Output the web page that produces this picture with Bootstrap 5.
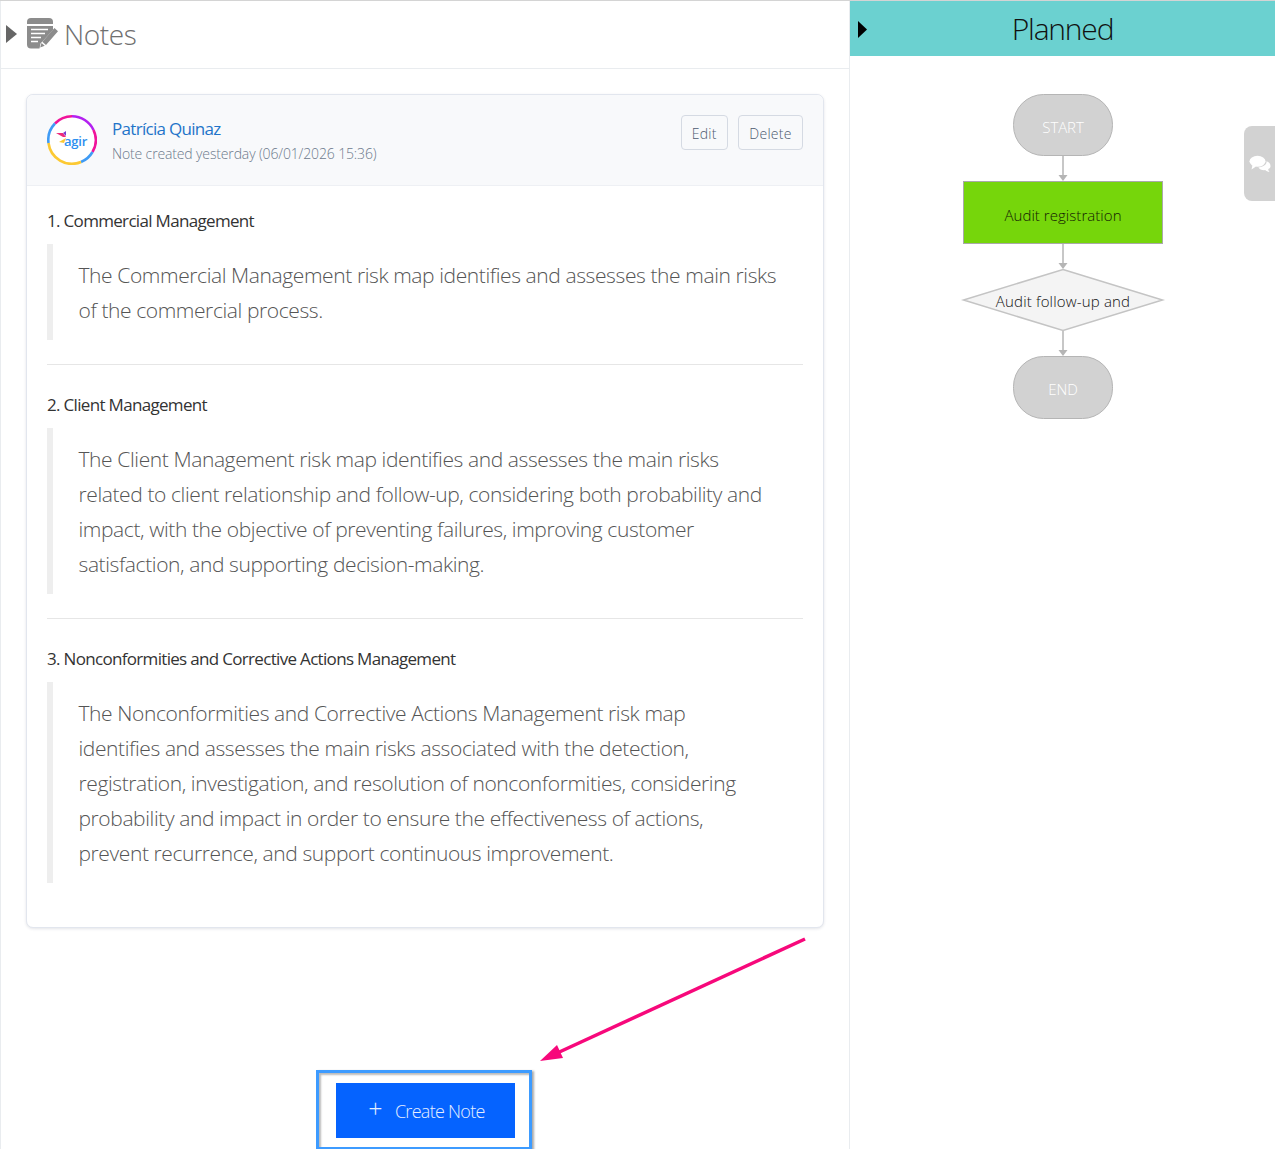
<!DOCTYPE html>
<html lang="en">
<head>
  <meta charset="UTF-8">
  <title>Notes</title>
  <link rel="stylesheet" href="https://cdn.jsdelivr.net/npm/bootstrap@5.3.0/dist/css/bootstrap.min.css">
  <style>
    html, body { height: 100%; }
    body {
      font-family: "Open Sans", "Noto Sans", sans-serif;
      font-weight: 300;
      overflow: hidden;
      position: relative;
      background: #fff;
      border-top: 1px solid #d4d4d4;
    }
    .page-wrap { height: 1148px; }
    .notes-pane { width: 850px; border-left: 1px solid #e9ecef; border-right: 1px solid #e9ecef; }
    .flow-pane { width: 425px; }
    .notes-head { height: 68px; border-bottom: 1px solid #e9ecef; padding: 0 0 2px 5px; color: #6f6f6f; }
    .notes-title { font-size: 28px; letter-spacing: -.4px; margin-left: 6px; }
    .note-icon { margin-left: 10px; }
    .note-card { margin: 25px 25px 0 25px; height: 834px; border-color: #e2e6ee; border-radius: 7px; box-shadow: 0 1px 3px rgba(30,40,70,.12); }
    .note-top { height: 91px; padding: 20px 20px 0 20px; background: #f8f9fb; border-bottom: 1px solid #eef0f4; border-radius: 7px 7px 0 0; }
    .author-box { margin-left: 15px; padding-top: 3px; }
    .author-name { font-size: 17px; letter-spacing: -.7px; color: #1f74c9; font-weight: 400; line-height: 22px; }
    .author-meta { font-size: 14px; letter-spacing: -.14px; color: #6d7a8c; line-height: 20px; margin-top: 4px; }
    .btn-row { column-gap: 10px; }
    .ghost-btn { font-size: 14px; font-weight: 300; letter-spacing: .3px; color: #4d5a70; border: 1px solid #d5dae3; border-radius: 4px; padding: 1px 10.200px 0; height: 35px; background: transparent; }
    .note-body { padding: 23px 20px 0 20px; }
    .topic-name { font-size: 17px; font-weight: 400; letter-spacing: -.68px; color: #333; line-height: 24px; margin-bottom: 11px; }
    .topic-quote { border-left: 6px solid #eee; margin: 0; padding: 14px 20px 11.500px 25.500px; font-size: 21px; line-height: 35px; letter-spacing: -.4px; color: #555; }
    .topic-sep { border: 0; border-top: 1px solid #e6e6e6; opacity: 1; margin: 24.500px 0 28px; }
    .planned-bar { height: 55px; background: #6bd1d0; color: #111; font-size: 30px; letter-spacing: -1.2px; }
    .planned-arrow { position: absolute; left: 8px; top: 20px; }
    .flow-svg { display: block; }
    .flow-svg text { font-family: "Open Sans", "Noto Sans", sans-serif; font-weight: 300; text-anchor: middle; }
    .chat-tab { position: absolute; right: 0; top: 125px; width: 31px; height: 75px; background: #d2d2d2; border-radius: 8px 0 0 8px; }
    .create-frame { position: absolute; left: 316px; top: 1069px; width: 216px; height: 80px; border: 3px solid #3d9bff; box-shadow: 2px 1px 2px #aaa, inset 2px 2px 2px #bbb; }
    .create-btn { position: absolute; left: 336px; top: 1082px; width: 179px; height: 55px; background: #0563ff; color: #e6efff; border: 0; border-radius: 0; font-size: 18px; letter-spacing: -.72px; font-weight: 300; padding: 2px 0 0 2px; }
    .plus-mark { font-size: 25px; margin-right: 13px; line-height: 1; position: relative; top: -3px; }
    .annot-arrow { position: absolute; left: 530px; top: 930px; }
  </style>
</head>
<body>

<div class="page-wrap d-flex">
  <div class="notes-pane flex-shrink-0">
    <div class="notes-head d-flex align-items-center">
      <svg width="11" height="18" viewBox="0 0 11 18"><path d="M0 0 L11 9 L0 18 Z" fill="#666"/></svg>
      <svg class="note-icon" width="31" height="31" viewBox="0 0 31 31">
        <path d="M4 0h18a4 4 0 0 1 4 4v2H0V4a4 4 0 0 1 4-4z" fill="#8c8c8c"/>
        <path d="M0 8h26v4L13.500 25.500l-1 5H4a4 4 0 0 1-4-4z" fill="#8c8c8c"/>
        <path d="M4 11.500h17M4 15.500h14M4 19.500h10M4 23.500h7" stroke="#fff" stroke-width="1.600"/>
        <path d="M27.500 10l3.500 3.200L19 27l-3.700-3.200zM14.500 25l3.200 2.800-4.500 1.700z" fill="#8c8c8c"/>
      </svg>
      <span class="notes-title">Notes</span>
    </div>

    <div class="card note-card">
      <div class="note-top d-flex">
        <svg width="50" height="50" viewBox="0 0 50 50" class="flex-shrink-0">
          <circle cx="25" cy="25" r="23.700" fill="#fff"/>
          <g fill="none" stroke-width="2.600">
            <path d="M25 1.300A23.700 23.700 0 0 1 46.500 15" stroke="#b321f0"/>
            <path d="M8 8.500A23.700 23.700 0 0 1 25 1.300" stroke="#f0149a"/>
            <path d="M46.500 15A23.700 23.700 0 0 1 45.500 37" stroke="#f0149a"/>
            <path d="M45.500 37A23.700 23.700 0 0 1 34 47" stroke="#3f9bf5"/>
            <path d="M34 47A23.700 23.700 0 0 1 1.500 28" stroke="#fcc933"/>
            <path d="M1.500 28A23.700 23.700 0 0 1 8 8.500" stroke="#3f9bf5"/>
          </g>
          <path d="M9 18l7 0 3 4-3 0z" fill="#ee2a7b"/>
          <path d="M12 27l7-4-2 5z" fill="#fcc933"/>
          <path d="M16 18l3-2 0 5z" fill="#7a3bd0"/>
          <text x="17" y="31" font-size="13" font-weight="600" fill="#2d8ff0" font-family="Open Sans, sans-serif" letter-spacing="-.2">agir</text>
        </svg>
        <div class="author-box flex-grow-1">
          <div class="author-name">Patrícia Quinaz</div>
          <div class="author-meta">Note created yesterday (06/01/2026 15:36)</div>
        </div>
        <div class="d-flex btn-row">
          <button type="button" class="btn ghost-btn">Edit</button>
          <button type="button" class="btn ghost-btn">Delete</button>
        </div>
      </div>
      <div class="note-body">
        <div class="topic-name">1. Commercial Management</div>
        <div class="topic-quote">The Commercial Management risk map identifies and assesses the main risks<br>of the commercial process.</div>
        <hr class="topic-sep">
        <div class="topic-name">2. Client Management</div>
        <div class="topic-quote">The Client Management risk map identifies and assesses the main risks<br>related to client relationship and follow-up, considering both probability and<br>impact, with the objective of preventing failures, improving customer<br>satisfaction, and supporting decision-making.</div>
        <hr class="topic-sep">
        <div class="topic-name">3. Nonconformities and Corrective Actions Management</div>
        <div class="topic-quote">The Nonconformities and Corrective Actions Management risk map<br>identifies and assesses the main risks associated with the detection,<br>registration, investigation, and resolution of nonconformities, considering<br>probability and impact in order to ensure the effectiveness of actions,<br>prevent recurrence, and support continuous improvement.</div>
      </div>
    </div>
  </div>

  <div class="flow-pane position-relative flex-shrink-0">
    <div class="planned-bar d-flex align-items-center justify-content-center">Planned</div>
    <svg class="planned-arrow" width="9" height="17" viewBox="0 0 9 17"><path d="M0 0 L9 8.500 L0 17 Z" fill="#000"/></svg>
    <svg class="flow-svg" width="425" height="380" viewBox="0 56 425 380">
      <g stroke="#b5b5b5" stroke-width="1.500" fill="none">
        <path d="M213 155V176M213 243V264M213 330V351"/>
      </g>
      <g fill="#b5b5b5">
        <path d="M208.500 175h9l-4.500 6z"/>
        <path d="M208.500 263h9l-4.500 6z"/>
        <path d="M208.500 350h9l-4.500 6z"/>
      </g>
      <rect x="163.500" y="94.500" width="99" height="61" rx="30" fill="#d2d2d2" stroke="#b5b5b5"/>
      <text x="213" y="133" font-size="15" fill="#fff" letter-spacing="-.1">START</text>
      <rect x="113.500" y="181.500" width="199" height="62" fill="#76d60b" stroke="#a9a9a9"/>
      <text x="213" y="221" font-size="15" fill="#142003" letter-spacing=".05">Audit registration</text>
      <path d="M213 269.500L312.500 300L213 330.500L113.500 300Z" fill="#f4f4f4" stroke="#c4c4c4" stroke-width="1.500"/>
      <text x="213" y="307" font-size="15" fill="#111" letter-spacing=".17">Audit follow-up and</text>
      <rect x="163.500" y="356.500" width="99" height="62" rx="30" fill="#d2d2d2" stroke="#b5b5b5"/>
      <text x="213" y="395" font-size="15" fill="#fff">END</text>
    </svg>
  </div>
</div>

<div class="chat-tab d-flex align-items-center justify-content-center">
  <svg width="22" height="18" viewBox="0 0 22 18">
    <path d="M21.500 11c0-2.300-1.600-4-3.900-4.700C17.800 9.800 13.800 12.300 9.400 12.300c.9 1.800 3.200 2.900 5.600 2.900l1.200-.1c.9 1 2.600 1.900 4.300 1.900-.7-.6-1.200-1.700-1.300-2.900C21 13.300 21.500 12.200 21.500 11z" fill="#fff"/>
    <ellipse cx="8.500" cy="6.300" rx="8" ry="5.500" fill="#fff"/>
    <path d="M3.500 10l-1 4.500 4.500-3z" fill="#fff"/>
  </svg>
</div>

<svg class="annot-arrow" width="285" height="140" viewBox="0 0 285 140">
  <path d="M275 8L25 123" stroke="#f7087b" stroke-width="3.500" fill="none"/>
  <path d="M10 130L27 114L33 127Z" fill="#f7087b"/>
</svg>
<div class="create-frame"></div>
<button type="button" class="btn create-btn d-flex align-items-center justify-content-center"><span class="plus-mark">+</span>Create Note</button>

<script src="https://cdn.jsdelivr.net/npm/bootstrap@5.3.0/dist/js/bootstrap.bundle.min.js"></script>
</body>
</html>
